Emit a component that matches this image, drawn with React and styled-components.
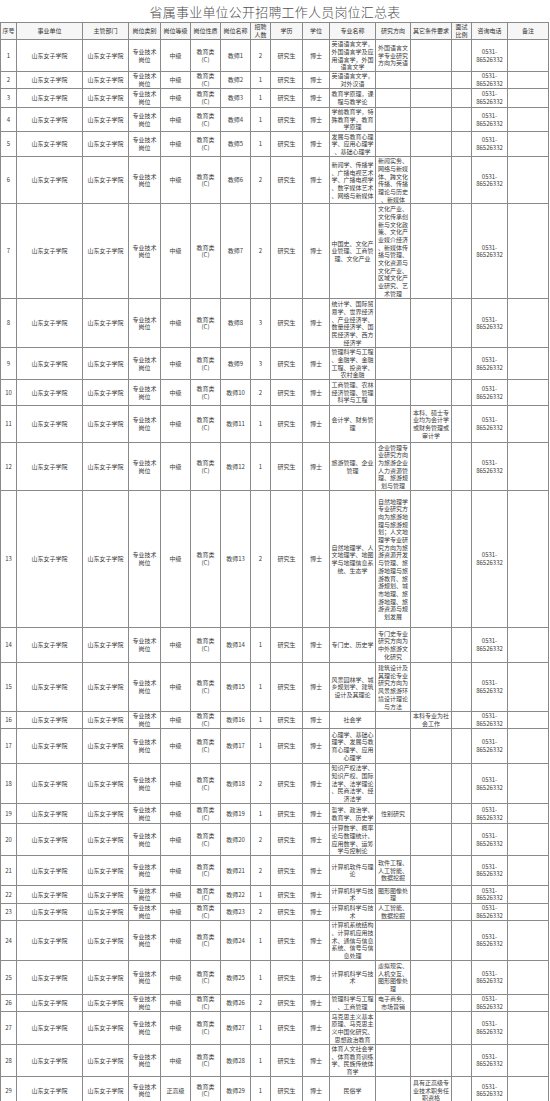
import React from 'react'
import styled, { createGlobalStyle } from 'styled-components'

const GlobalStyle = createGlobalStyle`
  html, body {
    margin: 0;
    padding: 0;
    background: #fff;
  }
  body {
    font-family: "Noto Sans CJK SC", sans-serif;
    color: #333;
  }
`

const COLS = [16, 66, 46, 32, 30, 30, 30, 20, 32, 27, 46, 35, 41, 20, 36, 41]
const HEADERS = [
  '序号', '事业单位', '主管部门', '岗位类别', '岗位等级', '岗位性质', '岗位名称', '招聘人数',
  '学历', '学位', '专业名称', '研究方向', '其它条件要求', '面试比例', '咨询电话', '备注',
]

// [count, height, major, direction, other, level]
const ROWS = [
  [2, 32, '英语语言文学，外国语言学及应用语言学，外国语言文学', '外国语言文学专业研究方向为英语'],
  [1, 17, '英语语言文学，对外汉语'],
  [1, 19, '教育学原理，课程与教学论'],
  [1, 24, '学前教育学，特殊教育学，教育学原理'],
  [1, 25, '发展与教育心理学、应用心理学、基础心理学'],
  [2, 47, '新闻学、传播学、广播电视艺术学、广播电视学、数字媒体艺术、网络与新媒体', '新闻实务、网络与新媒体、跨文化传播、传播理论与历史、新媒体'],
  [2, 95, '中国史、文化产业管理、工商管理、文化产业', '文化产业、文化传承创新与文化政策、文化产业媒介经济、新媒体传播与管理、文化资源与文化产业、区域文化产业研究、艺术管理'],
  [3, 49, '统计学、国际贸易学、世界经济、产业经济学、数量经济学、国民经济学、西方经济学'],
  [3, 31, '管理科学与工程、金融学、金融工程、投资学、农村金融'],
  [2, 26, '工商管理、农林经济管理、管理科学与工程'],
  [1, 37, '会计学、财务管理', '', '本科、硕士专业均为会计学或财务管理或审计学'],
  [1, 48, '旅游管理、企业管理', '企业管理专业研究方向为旅游企业人力资源管理、旅游规划与管理'],
  [2, 137, '自然地理学、人文地理学、地图学与地理信息系统、生态学', '自然地理学专业研究方向为旅游地理与旅游规划；人文地理学专业研究方向为旅游资源开发与管理、旅游地理与旅游教育、旅游规划、城市地理、旅游地理、旅游资源与规划发展'],
  [1, 35, '专门史、历史学', '专门史专业研究方向为中外旅游文化研究'],
  [1, 49, '风景园林学、城乡规划学、建筑设计及其理论', '建筑设计及其理论专业研究方向为风景旅游环境设计理论与方法'],
  [1, 17, '社会学', '', '本科专业为社会工作'],
  [1, 35, '心理学、基础心理学、发展与教育心理学、应用心理学'],
  [2, 40, '知识产权法学、知识产权、国际法学、法学理论、民商法学、经济法学'],
  [1, 20, '哲学、政治学、教育学、历史学', '性别研究'],
  [2, 30, '计算数学、概率论与数理统计、应用数学、运筹学与控制论'],
  [2, 30, '计算机软件与理论', '软件工程、人工智能、数据挖掘'],
  [1, 18, '计算机科学与技术', '图形图像处理'],
  [2, 17, '计算机科学与技术', '人工智能、数据挖掘'],
  [1, 40, '计算机系统结构、计算机应用技术、通信与信息系统、信号与信息处理'],
  [1, 34, '计算机科学与技术', '虚拟现实、人机交互、图形图像处理'],
  [2, 17, '管理科学与工程、工商管理', '电子商务、市场营销'],
  [1, 33, '马克思主义基本原理、马克思主义中国化研究、思想政治教育'],
  [1, 32, '体育人文社会学、体育教育训练学、民族传统体育学'],
  [1, 28, '民俗学', '', '具有正高级专业技术职务任职资格', '正高级'],
]

const Page = styled.div`
  width: 550px;
  height: 1101px;
  overflow: hidden;
  display: flex;
  flex-direction: column;
`

const Title = styled.h1`
  margin: 0;
  height: 22px;
  flex: none;
  display: flex;
  align-items: center;
  justify-content: center;
  font-size: 13px;
  font-weight: 300;
  letter-spacing: 0.2px;
  color: #505050;
`

const Table = styled.table`
  width: 548px;
  height: 1078px;
  flex: none;
  table-layout: fixed;
  border-collapse: collapse;
  font-size: 6px;
  line-height: 7.7px;
`

const Row = styled.tr`
  height: ${p => p.$h}px;
`

const HeadCell = styled.th`
  border: 1px solid #8a8a8a;
  background: #f6f6f6;
  font-weight: 400;
  color: #333;
  padding: 0 1px;
  text-align: center;
  vertical-align: middle;
  overflow: hidden;
  line-break: anywhere;
`

const Cell = styled.td`
  border: 1px solid #8a8a8a;
  padding: 0 ${p => (p.$tight ? 1 : 2)}px;
  text-align: center;
  vertical-align: middle;
  color: #3a3a3a;
  overflow: hidden;
  word-break: break-all;
  line-break: anywhere;
`

const Phone = () => (
  <>
    0531-
    <br />
    86526332
  </>
)

const App = () => {
  return (
    <Page>
      <GlobalStyle />
      <Title>省属事业单位公开招聘工作人员岗位汇总表</Title>
      <Table>
        <colgroup>
          {COLS.map((w, i) => (
            <col key={i} style={{ width: w }} />
          ))}
        </colgroup>
        <thead>
          <Row $h={17}>
            {HEADERS.map(h => (
              <HeadCell key={h}>{h}</HeadCell>
            ))}
          </Row>
        </thead>
        <tbody>
          {ROWS.map(([count, h, major, dir = '', other = '', level = '中级'], i) => (
            <Row key={i} $h={h}>
              <Cell $tight>{i + 1}</Cell>
              <Cell>山东女子学院</Cell>
              <Cell>山东女子学院</Cell>
              <Cell>专业技术岗位</Cell>
              <Cell>{level}</Cell>
              <Cell>
                教育类
                <br />
                (C)
              </Cell>
              <Cell $tight>教师{i + 1}</Cell>
              <Cell $tight>{count}</Cell>
              <Cell>研究生</Cell>
              <Cell>博士</Cell>
              <Cell $tight>{major}</Cell>
              <Cell $tight>{dir}</Cell>
              <Cell>{other}</Cell>
              <Cell />
              <Cell $tight>
                <Phone />
              </Cell>
              <Cell />
            </Row>
          ))}
        </tbody>
      </Table>
    </Page>
  )
}

export default App
